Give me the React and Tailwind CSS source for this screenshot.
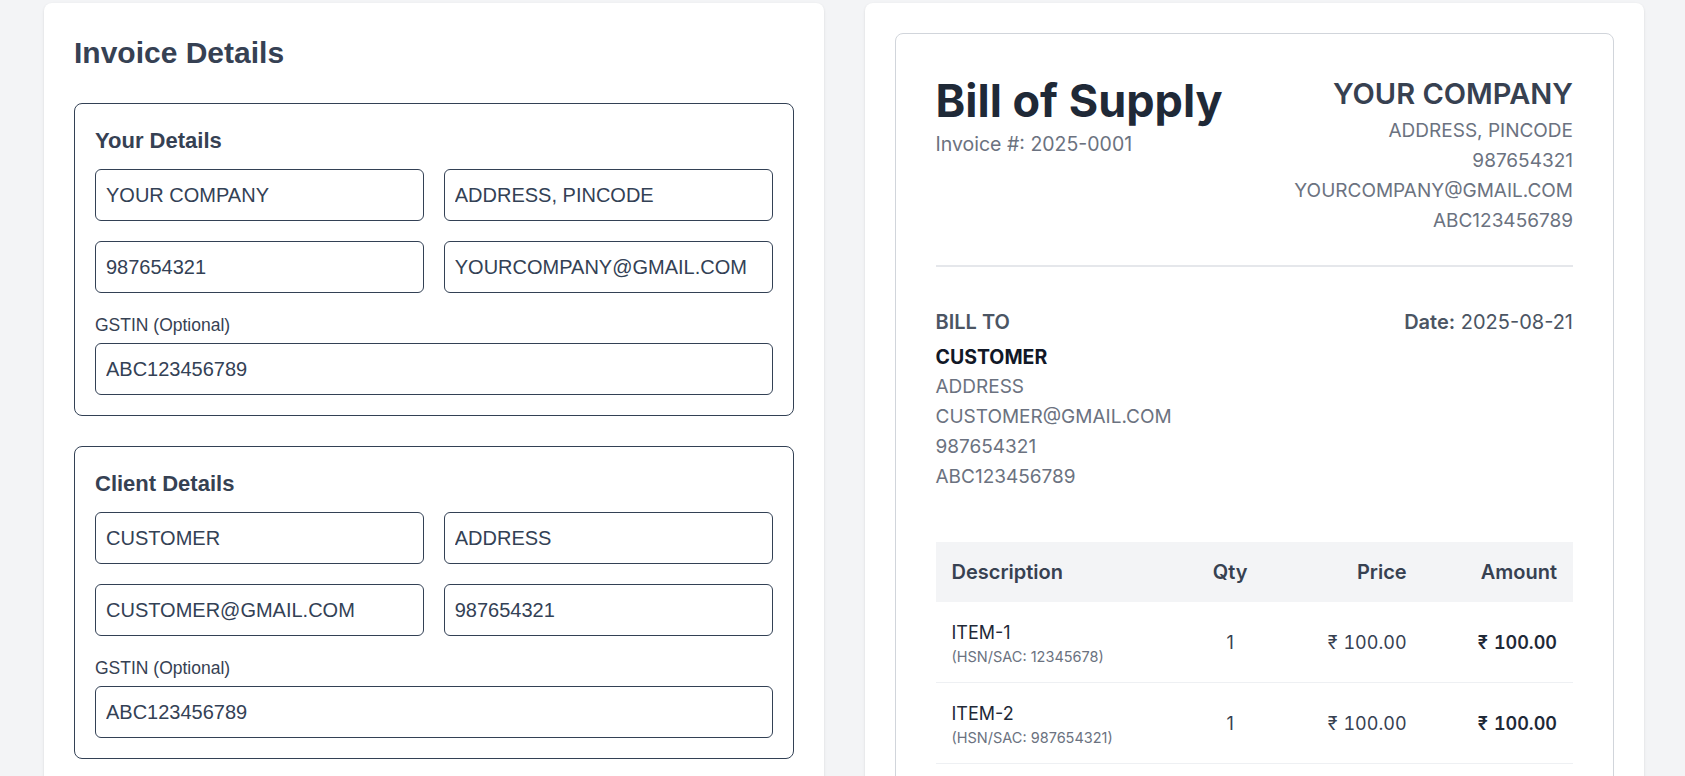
import { useState } from "react";

const yourDetails = {
  title: "Your Details",
  fields: ["YOUR COMPANY", "ADDRESS, PINCODE", "987654321", "YOURCOMPANY@GMAIL.COM"],
  gstin: "ABC123456789",
};

const clientDetails = {
  title: "Client Details",
  fields: ["CUSTOMER", "ADDRESS", "CUSTOMER@GMAIL.COM", "987654321"],
  gstin: "ABC123456789",
};

const items = [
  { name: "ITEM-1", hsn: "12345678", qty: 1, price: "100.00", amount: "100.00" },
  { name: "ITEM-2", hsn: "987654321", qty: 1, price: "100.00", amount: "100.00" },
];

const Field = ({ value }) => (
  <input
    readOnly
    value={value}
    className="w-full h-[52px] px-[10px] bg-white border border-[#334155] rounded-md text-[20px] text-[#334155] focus:outline-none"
  />
);

const DetailsBox = ({ data }) => (
  <div className="border border-[#334155] rounded-lg p-5">
    <h3 className="text-[22px] leading-[34px] font-bold text-[#364153] mb-[11px]">{data.title}</h3>
    <div className="grid grid-cols-2 gap-5">
      {data.fields.map((f) => (
        <Field key={f} value={f} />
      ))}
    </div>
    <label className="block mt-5 mb-[6px] text-[17.5px] leading-6 text-[#364153]">GSTIN (Optional)</label>
    <Field value={data.gstin} />
  </div>
);

const Rupee = ({ value }) => (
  <span className="tabular-nums">
    <span className="mr-[6px]">₹</span>
    {value}
  </span>
);

const App = () => {
  const [company] = useState(yourDetails);
  const [client] = useState(clientDetails);

  return (
    <div className="h-screen overflow-hidden bg-[#f3f4f6] pl-[44px] pr-[41px] pt-[3px]">
      <div className="grid grid-cols-2 gap-[41px] items-start">
        {/* Form side */}
        <div className="bg-white rounded-lg shadow-sm px-[30px] pt-8 pb-8 font-['Liberation_Sans',Arial,sans-serif]">
          <h2 className="text-[30px] leading-[36px] font-bold text-[#364153] mb-8">Invoice Details</h2>
          <div className="flex flex-col gap-[30px]">
            <DetailsBox data={company} />
            <DetailsBox data={client} />
          </div>
        </div>

        {/* Preview side */}
        <div className="bg-white rounded-lg shadow-sm p-[30px] font-['Inter','Noto_Sans',sans-serif]">
          <div className="border border-[#d1d5db] rounded-lg p-10">
            <div className="flex justify-between items-start">
              <div>
                <h1 className="text-[45px] leading-[54px] font-bold text-[#1f2937]">Bill of Supply</h1>
                <p className="mt-[2px] text-[19.5px] leading-7 text-[#6b7280]">Invoice #: 2025-0001</p>
              </div>
              <div className="text-right">
                <h2 className="text-[29px] leading-10 font-semibold text-[#374151]">{company.fields[0]}</h2>
                <div className="mt-[2px] text-[19px] leading-[30px] text-[#6b7280]">
                  <p>{company.fields[1]}</p>
                  <p>{company.fields[2]}</p>
                  <p>{company.fields[3]}</p>
                  <p>{company.gstin}</p>
                </div>
              </div>
            </div>

            <div className="mt-[29px] border-t-2 border-[#e5e7eb]" />

            <div className="mt-[41px] flex justify-between items-start">
              <div>
                <p className="text-xl leading-7 font-semibold text-[#4b5563]">BILL TO</p>
                <p className="mt-[6px] text-[19.5px] leading-[30px] font-bold text-[#111827]">{client.fields[0]}</p>
                <div className="text-[19px] leading-[30px] text-[#6b7280]">
                  <p>{client.fields[1]}</p>
                  <p>{client.fields[2]}</p>
                  <p>{client.fields[3]}</p>
                  <p>{client.gstin}</p>
                </div>
              </div>
              <p className="text-xl leading-7 text-[#4b5563]">
                <span className="font-semibold">Date:</span> 2025-08-21
              </p>
            </div>

            <table className="mt-[50px] w-full table-fixed border-collapse">
              <colgroup>
                <col className="w-[234px]" />
                <col className="w-[120px]" />
                <col className="w-[132px]" />
                <col className="w-[150px]" />
              </colgroup>
              <thead>
                <tr className="bg-[#f3f4f6] text-xl leading-7 text-[#374151]">
                  <th className="px-4 py-4 text-left font-semibold">Description</th>
                  <th className="py-4 text-center font-semibold">Qty</th>
                  <th className="px-4 py-4 text-right font-semibold">Price</th>
                  <th className="px-4 py-4 text-right font-semibold">Amount</th>
                </tr>
              </thead>
              <tbody>
                {items.map((it) => (
                  <tr key={it.name} className="border-b border-[#eef0f3] align-middle">
                    <td className="px-4 pt-[17px] pb-[15px]">
                      <p className="text-lg leading-7 text-[#1f2937]">{it.name}</p>
                      <p className="text-[14.5px] leading-5 text-[#6b7280]">(HSN/SAC: {it.hsn})</p>
                    </td>
                    <td className="pt-[17px] pb-[15px] text-center text-lg text-[#374151]">{it.qty}</td>
                    <td className="px-4 pt-[17px] pb-[15px] text-right text-lg text-[#374151]">
                      <Rupee value={it.price} />
                    </td>
                    <td className="px-4 pt-[17px] pb-[15px] text-right text-lg font-semibold text-[#1f2937]">
                      <Rupee value={it.amount} />
                    </td>
                  </tr>
                ))}
              </tbody>
            </table>
          </div>
        </div>
      </div>
    </div>
  );
};

export default App;
